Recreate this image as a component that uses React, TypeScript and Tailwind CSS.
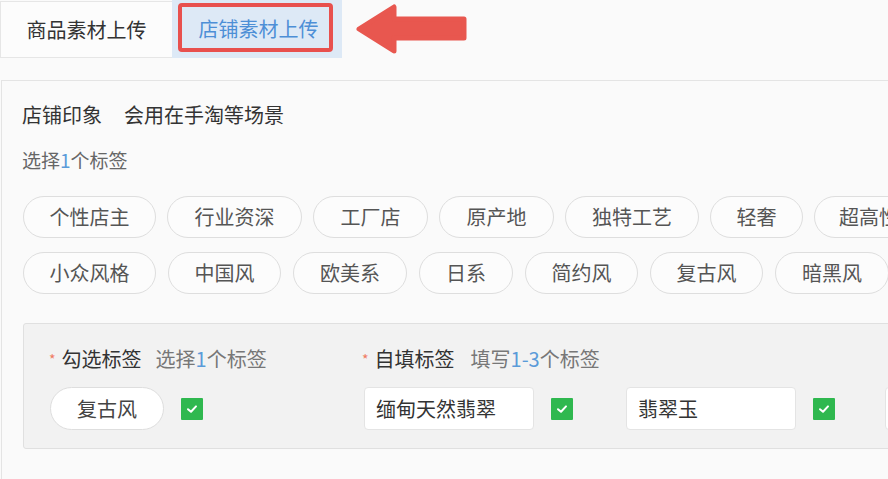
import React from "react";

const font = { fontFamily: '"Noto Sans CJK SC", "Noto Sans", sans-serif' };

function Check() {
  return (
    <div className="w-[22px] h-[22px] bg-[#2fb84f] flex items-center justify-center shrink-0 rounded-[1px]">
      <svg width="12" height="10" viewBox="0 0 12 10">
        <path d="M2 5.2 L5 7.8 L10 2.4" fill="none" stroke="#fff" strokeWidth="2" strokeLinecap="round" strokeLinejoin="round" />
      </svg>
    </div>
  );
}

const row1 = [
  ["个性店主", 133],
  ["行业资深", 135],
  ["工厂店", 115],
  ["原产地", 115],
  ["独特工艺", 134],
  ["轻奢", 93],
  ["超高性价比", 150],
];
const row2 = [
  ["小众风格", 133],
  ["中国风", 113],
  ["欧美系", 114],
  ["日系", 94],
  ["简约风", 113],
  ["复古风", 113],
  ["暗黑风", 114],
];

function Tag({ label, w }: { label: string; w: number }) {
  return (
    <div
      style={{ width: w }}
      className="h-[42px] shrink-0 rounded-full border border-[#dedede] bg-[#fcfcfc] flex items-center justify-center text-[20px] text-[#555] whitespace-nowrap overflow-hidden"
    >
      {label}
    </div>
  );
}

export default function App() {
  return (
    <div style={font} className="w-[888px] h-[479px] bg-[#fafafa] overflow-hidden">
      {/* tabs */}
      <div className="flex items-start h-[80px]">
        <div className="w-[172px] h-[57px] mt-[1px] border-l border-t border-b border-[#e6e6e6] bg-[#fcfcfc] flex items-center justify-center text-[20px] text-[#333]">
          商品素材上传
        </div>
        <div className="relative w-[170px] h-[58px] bg-[#dde9f6] flex items-center justify-center text-[20px] text-[#4d8fd6] pl-[3px]">
          店铺素材上传
          <div className="absolute left-[6px] top-[3px] w-[155px] h-[49px] border-[4px] border-[#e8504e] rounded-[4px]" />
        </div>
        <svg className="ml-[14px] mt-[4px]" width="114" height="52" viewBox="0 0 114 52">
          <path
            d="M3 25 L38 3 L38 15 L108 15 L108 34 L38 34 L38 47 Z"
            fill="#e8574f"
            stroke="#e8574f"
            strokeWidth="5"
            strokeLinejoin="round"
          />
        </svg>
      </div>

      {/* content panel */}
      <div className="ml-[1px] border-t border-l border-[#e4e4e4] h-[400px] pl-[21px] pt-[20px]">
        <div className="flex items-center h-[28px] text-[20px] text-[#333] leading-[28px] -ml-[1px]">
          <span>店铺印象</span>
          <span className="ml-[22px]">会用在手淘等场景</span>
        </div>
        <div className="mt-[17px] h-[28px] leading-[28px] text-[19px] text-[#666] -ml-[1px]">
          选择<span className="text-[#5b9bd9]">1</span>个标签
        </div>
        <div className="mt-[22px] flex gap-[11px]">
          {row1.map(([l, w]) => (
            <Tag key={l as string} label={l as string} w={w as number} />
          ))}
        </div>
        <div className="mt-[14px] flex gap-[12px]">
          {row2.map(([l, w]) => (
            <Tag key={l as string} label={l as string} w={w as number} />
          ))}
        </div>

        {/* grey box */}
        <div className="mt-[29px] w-[900px] h-[126px] bg-[#f2f2f2] border border-[#e0e0e0] rounded-[3px] pl-[25px] pt-[21px]">
          <div className="flex">
            <div className="w-[313px] shrink-0">
              <div className="flex items-center h-[28px] text-[20px] leading-[28px]">
                <span className="text-[#f07a62] text-[14px] mr-[6px]">*</span>
                <span className="text-[#333]">勾选标签</span>
                <span className="text-[#777] ml-[14px]">
                  选择<span className="text-[#5b9bd9]">1</span>个标签
                </span>
              </div>
              <div className="mt-[14px] flex items-center">
                <div className="w-[114px] h-[43px] ml-[1px] rounded-full border border-[#dedede] bg-white flex items-center justify-center text-[20px] text-[#444]">
                  复古风
                </div>
                <div className="ml-[17px]">
                  <Check />
                </div>
              </div>
            </div>
            <div className="shrink-0">
              <div className="flex items-center h-[28px] text-[20px] leading-[28px]">
                <span className="text-[#f07a62] text-[14px] mr-[6px]">*</span>
                <span className="text-[#333]">自填标签</span>
                <span className="text-[#777] ml-[16px]">
                  填写<span className="text-[#5b9bd9]">1-3</span>个标签
                </span>
              </div>
              <div className="mt-[14px] flex items-center">
                <div className="w-[170px] h-[43px] ml-[2px] rounded-[4px] border border-[#e4e4e4] bg-white flex items-center pl-[11px] text-[20px] text-[#333]">
                  缅甸天然翡翠
                </div>
                <div className="ml-[17px]">
                  <Check />
                </div>
                <div className="w-[170px] h-[43px] ml-[53px] rounded-[4px] border border-[#e4e4e4] bg-white flex items-center pl-[11px] text-[20px] text-[#333]">
                  翡翠玉
                </div>
                <div className="ml-[17px]">
                  <Check />
                </div>
                <div className="w-[170px] h-[43px] ml-[50px] rounded-[4px] border border-[#e4e4e4] bg-white" />
              </div>
            </div>
          </div>
        </div>
      </div>
    </div>
  );
}
